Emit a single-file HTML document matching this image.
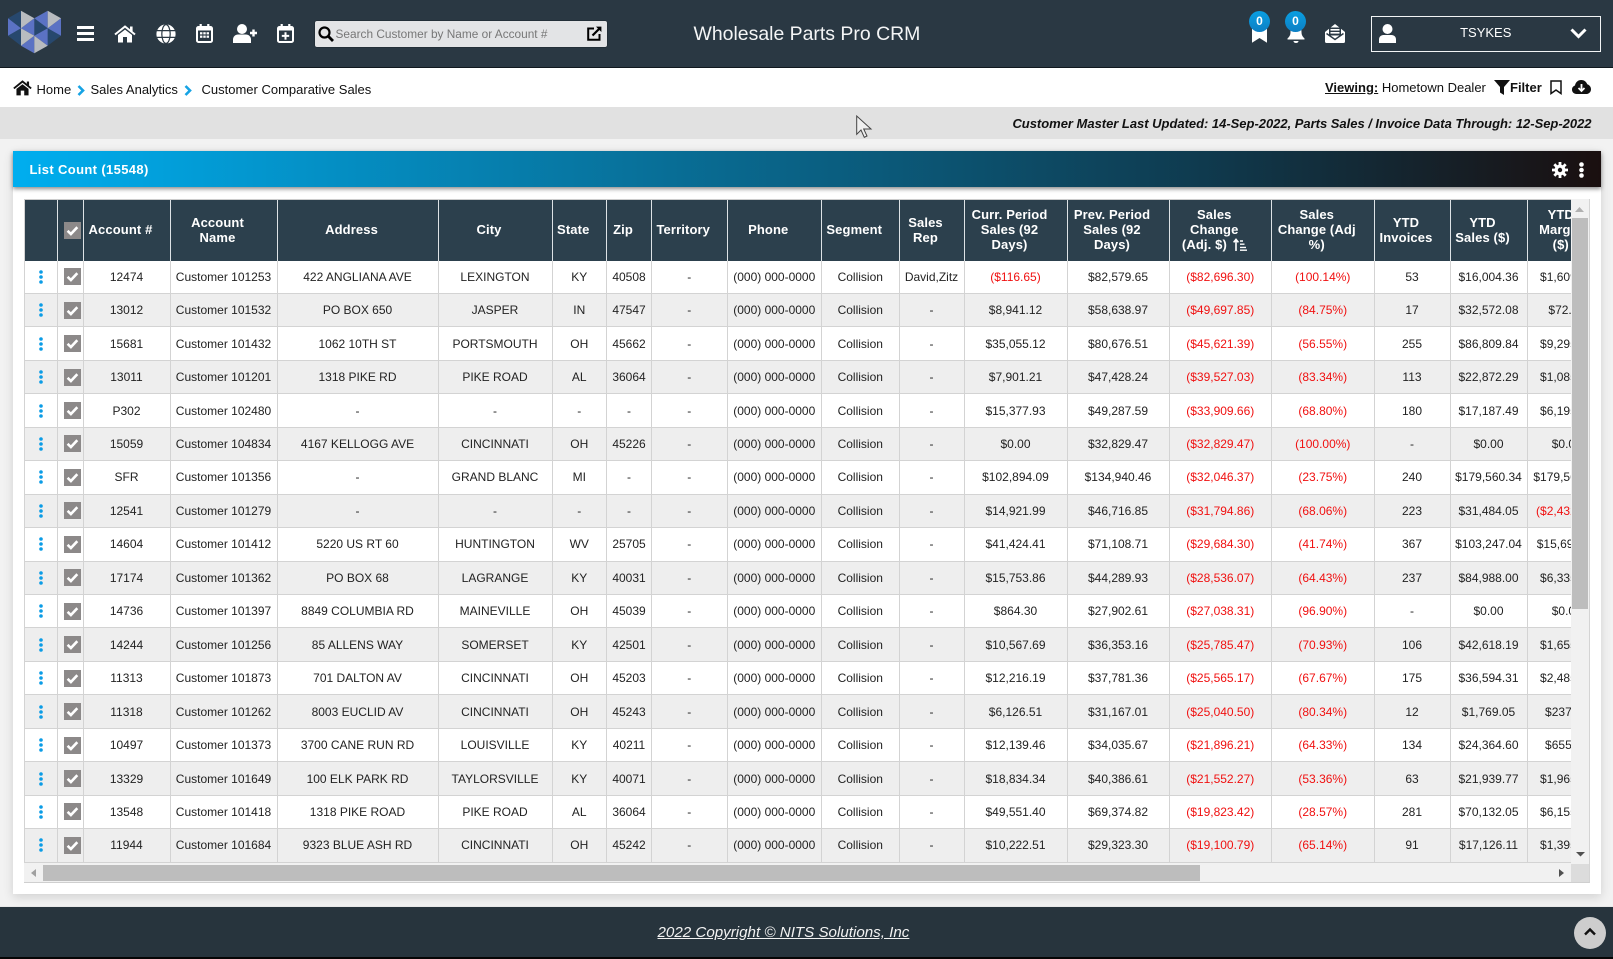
<!DOCTYPE html>
<html lang="en"><head><meta charset="utf-8"><title>Wholesale Parts Pro CRM</title>
<style>
*{box-sizing:border-box}
html,body{margin:0;padding:0;width:1613px;height:959px;overflow:hidden;background:#f2f2f2;font-family:"Liberation Sans",sans-serif;color:#222}
.a{position:absolute}
#top{left:0;top:0;width:1613px;height:68px;background:#2a3843;border-bottom:1px solid #10181e}
#bc{left:0;top:68px;width:1613px;height:39px;background:#fff;font-size:13px;color:#111}
#strip{left:0;top:107px;width:1613px;height:32px;background:#e1e1e1}
#card{left:13px;top:151px;width:1588px;height:743px;background:#fff;box-shadow:0 3px 10px rgba(0,0,0,.14)}
#bar{left:13px;top:151px;width:1588px;height:36px;background:linear-gradient(to right,#00aeef 0,#0f3a4e 75%,#1a0f0f 100%);box-shadow:0 2px 4px rgba(0,0,0,.45)}
#tw{left:24px;top:199px;width:1566px;height:683.5px;background:#f1f1f1;border-right:1px solid #d4d4d4;border-bottom:1px solid #cfcfcf}
#clip{left:0;top:0;width:1547px;height:664.5px;overflow:hidden}
.r{display:grid;grid-template-columns:33.5px 26px 87px 107px 161px 114px 54.5px 45px 75.5px 94.5px 77.5px 65px 103px 102px 102.5px 102.5px 76px 77px 79.5px;width:1583px}
.h{height:61.5px;background:#2c404d;color:#fff;font-weight:700;font-size:13px;line-height:15.2px;letter-spacing:.12px;border-top:1px solid #ccc}
.h span{display:flex;align-items:center;justify-content:center;text-align:center;padding-right:12px;padding-bottom:1px;border-right:1.5px solid #dde2e5}
.b{height:33.46px;font-size:12px;background:#fff;color:#222}
.b:nth-child(even){background:#eee}
.b span{display:flex;align-items:center;justify-content:center;white-space:nowrap;border-right:1.5px solid #d3d3d3;border-bottom:1.5px solid #d3d3d3;border-left:0}
.b span.n{color:#f01010}
.h span:first-child,.b span:first-child{border-left:1px solid #d3d3d3}
.h span:nth-child(1){padding:0}
.h span:nth-child(2),.b span:nth-child(2){padding:0 0 0 4.5px}
svg{display:block}
.k{width:6px;height:14px}
.c{width:17px;height:17px}
.t{white-space:nowrap}
.s{display:inline-block;vertical-align:-2px;margin-left:2px}
#foot{left:0;top:905.5px;width:1613px;height:53.5px;background:#27343d;border-top:1px solid #e8e8e8;border-bottom:2px solid #050505}
</style></head><body>
<svg width="0" height="0" style="position:absolute"><defs>
<symbol id="k" viewBox="0 0 6 14"><circle cx="3" cy="2" r="1.8" fill="#0b9ce6"/><circle cx="3" cy="7" r="1.8" fill="#0b9ce6"/><circle cx="3" cy="12" r="1.8" fill="#0b9ce6"/></symbol>
<symbol id="c" viewBox="0 0 17 17"><rect width="17" height="17" fill="#8c8989"/><path d="M3.6 8.8l3.3 3.2 6.4-6.8" fill="none" stroke="#fff" stroke-width="2.6"/></symbol>
</defs></svg>

<div class="a" id="top"></div>
<svg class="a" style="left:0;top:0" width="70" height="60" viewBox="0 0 70 60">
<g fill="#27486e"><path d="M8 18.3L21 10.7V28.2Z"/><path d="M8 35.8L21 28.2V45.7Z"/><path d="M34.3 18.3L47.7 28.2 34.3 35.8Z"/><path d="M47.7 28.2L61 35.8 47.7 45.7Z"/></g>
<g fill="#5b72c4"><path d="M8 18.3L21 28.2 8 35.8Z"/><path d="M34.3 18.3V35.8L21 28.2Z"/><path d="M21 45.7L34.3 35.8V53.3Z"/><path d="M34.3 18.3L47.7 10.7V28.2Z"/><path d="M34.3 35.8L47.7 28.2V45.7Z"/><path d="M61 18.3V35.8L47.7 28.2Z"/></g>
<g fill="#b9bcc0"><path d="M21 10.7L34.3 18.3 21 28.2Z"/><path d="M21 28.2L34.3 35.8 21 45.7Z"/><path d="M34.3 53.3V35.8L47.7 45.7Z"/><path d="M47.7 10.7L61 18.3 47.7 28.2Z"/></g>
</svg>
<!-- hamburger -->
<svg class="a" style="left:77px;top:26px" width="17" height="15"><rect width="17" height="3" fill="#fff"/><rect y="6" width="17" height="3" fill="#fff"/><rect y="12" width="17" height="3" fill="#fff"/></svg>
<!-- home -->
<svg class="a" style="left:114px;top:24.5px" width="22" height="18" viewBox="0 0 22 18"><path d="M1 9.5L11 1.5 21 9.5" fill="none" stroke="#fff" stroke-width="2"/><rect x="16" y="1.5" width="2.6" height="5" fill="#fff"/><path d="M4 10L11 4.6 18 10V17.5H13V12H9V17.5H4Z" fill="#fff"/></svg>
<!-- globe -->
<svg class="a" style="left:155.5px;top:24px" width="20" height="20" viewBox="0 0 20 20"><circle cx="10" cy="10" r="9.6" fill="#fff"/><ellipse cx="10" cy="10" rx="4.2" ry="9.4" fill="none" stroke="#2a3843" stroke-width="1.2"/><path d="M1 6.6H19M1 13.4H19" stroke="#2a3843" stroke-width="1.3"/></svg>
<!-- calendar -->
<svg class="a" style="left:195.5px;top:24px" width="17" height="19" viewBox="0 0 17 19"><rect x="1" y="3" width="15" height="15" rx="1.5" fill="#2a3843" stroke="#fff" stroke-width="2"/><rect x="1" y="3" width="15" height="3.5" fill="#fff"/><rect x="3.6" y="0" width="2.2" height="4" fill="#fff"/><rect x="11.2" y="0" width="2.2" height="4" fill="#fff"/><g fill="#fff"><rect x="4" y="8.2" width="2.4" height="2.2"/><rect x="7.3" y="8.2" width="2.4" height="2.2"/><rect x="10.6" y="8.2" width="2.4" height="2.2"/><rect x="4" y="11.6" width="2.4" height="2.2"/><rect x="7.3" y="11.6" width="2.4" height="2.2"/><rect x="10.6" y="11.6" width="2.4" height="2.2"/></g></svg>
<!-- user plus -->
<svg class="a" style="left:232.5px;top:24px" width="25" height="19" viewBox="0 0 25 19"><circle cx="9" cy="5" r="5" fill="#fff"/><path d="M0 19V15.5C0 12.5 2.5 10.5 5 10.5H13C15.5 10.5 18 12.5 18 15.5V19Z" fill="#fff"/><path d="M20.5 5.5V12.5M17 9H24" stroke="#fff" stroke-width="2.4"/></svg>
<!-- calendar plus -->
<svg class="a" style="left:277px;top:24px" width="17" height="19" viewBox="0 0 17 19"><rect x="1" y="3" width="15" height="15" rx="1.5" fill="#2a3843" stroke="#fff" stroke-width="2"/><rect x="1" y="3" width="15" height="3.5" fill="#fff"/><rect x="3.6" y="0" width="2.2" height="4" fill="#fff"/><rect x="11.2" y="0" width="2.2" height="4" fill="#fff"/><path d="M8.5 8.2V15.6M4.8 11.9H12.2" stroke="#fff" stroke-width="2"/></svg>
<!-- search -->
<div class="a" style="left:315px;top:20.5px;width:291.5px;height:26px;background:#e3e4e6;border-radius:2px;box-shadow:0 0 1px #000"></div>
<svg class="a" style="left:317.5px;top:26px" width="16" height="16" viewBox="0 0 16 16"><circle cx="6.5" cy="6.5" r="5" fill="none" stroke="#000" stroke-width="2.2"/><path d="M10.3 10.3L15 15" stroke="#000" stroke-width="2.8"/></svg>
<div class="a t" style="left:335.5px;top:26.6px;font-size:11.85px;line-height:15px;color:#777">Search Customer by Name or Account #</div>
<svg class="a" style="left:587px;top:26px" width="15" height="15" viewBox="0 0 15 15"><path d="M7 2.5H1.2V13.8H12.5V8" fill="none" stroke="#000" stroke-width="2"/><path d="M5.5 9.5L13 2" stroke="#000" stroke-width="2.2"/><path d="M9 0.6H14.4V6Z" fill="#000"/></svg>
<div class="a t" style="left:693.5px;top:21.5px;font-size:19.45px;line-height:24px;color:#f4f5f6">Wholesale Parts Pro CRM</div>
<!-- ribbon -->
<svg class="a" style="left:1252px;top:24px" width="15" height="19" viewBox="0 0 15 19"><path d="M0 0H15V18.8L7.5 14 0 18.8Z" fill="#fff"/></svg>
<div class="a t" style="left:1249px;top:10.5px;width:21px;height:21px;border-radius:50%;background:linear-gradient(#0a9fe2,#0c7fc4);color:#fff;font-weight:700;font-size:12px;line-height:21px;text-align:center">0</div>
<!-- bell -->
<svg class="a" style="left:1286.5px;top:24px" width="18" height="19" viewBox="0 0 18 19"><path d="M9 1C5 1 3.5 4 3.5 8C3.5 11 2.5 12.5 0.5 14.5V15.5H17.5V14.5C15.5 12.5 14.5 11 14.5 8C14.5 4 13 1 9 1Z" fill="#fff"/><path d="M6.5 17H11.5C11.5 18.2 10.4 19 9 19S6.5 18.2 6.5 17Z" fill="#fff"/></svg>
<div class="a t" style="left:1285px;top:10.5px;width:21px;height:21px;border-radius:50%;background:linear-gradient(#0a9fe2,#0c7fc4);color:#fff;font-weight:700;font-size:12px;line-height:21px;text-align:center">0</div>
<!-- envelope -->
<svg class="a" style="left:1325px;top:24px" width="20" height="19" viewBox="0 0 20 19"><path d="M0 8L10 0 20 8V17.5C20 18.4 19.4 19 18.5 19H1.5C.6 19 0 18.4 0 17.5Z" fill="#fff"/><path d="M1.5 9.5L10 15.5 18.5 9.5" fill="none" stroke="#2a3843" stroke-width="1.4"/><rect x="4" y="3.5" width="12" height="8" fill="#2a3843"/><rect x="5.5" y="5" width="9" height="1.6" fill="#fff"/><rect x="5.5" y="8" width="9" height="1.6" fill="#fff"/></svg>
<!-- user box -->
<div class="a" style="left:1370.5px;top:16px;width:230.5px;height:36px;border:1.5px solid #f2f4f5"></div>
<svg class="a" style="left:1379px;top:24px" width="17" height="19" viewBox="0 0 17 19"><circle cx="8.5" cy="5" r="5" fill="#fff"/><path d="M0 19V15.5C0 12.8 2 11 4.5 11H12.5C15 11 17 12.8 17 15.5V19Z" fill="#fff"/></svg>
<div class="a t" style="left:1460px;top:25px;width:51.5px;text-align:center;color:#fff;font-size:13px;line-height:15px">TSYKES</div>
<svg class="a" style="left:1570px;top:28px" width="17" height="11" viewBox="0 0 17 11"><path d="M1.5 1.5L8.5 8.5 15.5 1.5" fill="none" stroke="#fff" stroke-width="3"/></svg>

<div class="a" id="bc"></div>
<svg class="a" style="left:13px;top:79.5px" width="19" height="16" viewBox="0 0 22 18"><path d="M1 9.5L11 1.5 21 9.5" fill="none" stroke="#111" stroke-width="2.2"/><rect x="16" y="1.5" width="2.6" height="5" fill="#111"/><path d="M4 10L11 4.6 18 10V17.5H13V12H9V17.5H4Z" fill="#111"/></svg>
<div class="a t" style="left:36.5px;top:82px;font-size:13px;line-height:15px;color:#111">Home</div>
<svg class="a" style="left:77px;top:85px" width="8" height="11" viewBox="0 0 8 11"><path d="M1.5 1L6 5.5 1.5 10" fill="none" stroke="#16a3e4" stroke-width="2.6"/></svg>
<div class="a t" style="left:90.5px;top:82px;font-size:13px;line-height:15px;color:#111">Sales Analytics</div>
<svg class="a" style="left:184px;top:85px" width="8" height="11" viewBox="0 0 8 11"><path d="M1.5 1L6 5.5 1.5 10" fill="none" stroke="#16a3e4" stroke-width="2.6"/></svg>
<div class="a t" style="left:201.5px;top:82px;font-size:13px;line-height:15px;color:#111">Customer Comparative Sales</div>
<div class="a t" style="left:1325px;top:80px;font-size:13px;line-height:15px;color:#111"><b style="text-decoration:underline">Viewing:</b> Hometown Dealer</div>
<svg class="a" style="left:1494px;top:79.5px" width="16" height="15" viewBox="0 0 16 15"><path d="M0 0H16L10 7V15L6 12.5V7Z" fill="#111"/></svg>
<div class="a t" style="left:1510px;top:80px;font-size:13px;line-height:15px;font-weight:700;color:#111">Filter</div>
<svg class="a" style="left:1550px;top:79.5px" width="12" height="15" viewBox="0 0 12 15"><path d="M1 1H11V13.5L6 10 1 13.5Z" fill="none" stroke="#111" stroke-width="1.5"/></svg>
<svg class="a" style="left:1572px;top:80px" width="19" height="14" viewBox="0 0 19 14"><path d="M4.5 14C2 14 0 12 0 9.6 0 7.6 1.3 6 3 5.5 3.4 2.4 6 0 9.2 0 12 0 14.3 1.7 15.2 4.2 17.4 4.8 19 6.8 19 9.2 19 11.9 16.9 14 14.2 14Z" fill="#111"/><path d="M9.5 4V10M6.5 8L9.5 11 12.5 8" fill="none" stroke="#fff" stroke-width="1.8"/></svg>

<div class="a" id="strip"></div>
<div class="a t" style="right:21.5px;top:115.5px;font-size:13px;line-height:16px;font-weight:700;font-style:italic;letter-spacing:-.02px;color:#111">Customer Master Last Updated: 14-Sep-2022, Parts Sales / Invoice Data Through: 12-Sep-2022</div>
<svg class="a" style="left:855px;top:114px" width="20" height="26" viewBox="0 0 20 26"><path d="M1.7 2V20.3L6 16 9.3 23.3 12 22 8.7 15H16Z" fill="#efefef" stroke="#444" stroke-width="1"/></svg>

<div class="a" id="card"></div>
<div class="a" id="bar"></div>
<div class="a t" style="left:29.5px;top:162px;color:#fff;font-weight:700;font-size:13px;line-height:15px;letter-spacing:.36px">List Count (15548)</div>
<svg class="a" style="left:1551.5px;top:162px" width="16" height="16" viewBox="0 0 16 16"><path d="M8 2.6a5.4 5.4 0 1 0 0 10.8 5.4 5.4 0 0 0 0-10.8Zm0 3.2a2.2 2.2 0 1 1 0 4.4 2.2 2.2 0 0 1 0-4.4Z" fill="#fff" fill-rule="evenodd"/><g stroke="#fff" stroke-width="2.8"><path d="M8 0V3.4M8 12.6V16M0 8H3.4M12.6 8H16M2.3 2.3L4.7 4.7M11.3 11.3L13.7 13.7M13.7 2.3L11.3 4.7M4.7 11.3L2.3 13.7"/></g></svg>
<svg class="a" style="left:1579px;top:162px" width="5" height="16" viewBox="0 0 5 16"><circle cx="2.5" cy="2.5" r="2.3" fill="#fff"/><circle cx="2.5" cy="8" r="2.3" fill="#fff"/><circle cx="2.5" cy="13.5" r="2.3" fill="#fff"/></svg>

<div class="a" id="tw">
<div class="a" id="clip">
<div class="r h"><span></span><span><svg class="c"><use href="#c"/></svg></span><span>Account #</span><span>Account<br>Name</span><span>Address</span><span>City</span><span>State</span><span>Zip</span><span>Territory</span><span>Phone</span><span>Segment</span><span>Sales<br>Rep</span><span>Curr. Period<br>Sales (92<br>Days)</span><span>Prev. Period<br>Sales (92<br>Days)</span><span><div>Sales<br>Change<br>(Adj. $) <svg class="s" width="14" height="13" viewBox="0 0 14 13"><path d="M3 13V2M0.6 4.4L3 1.4 5.4 4.4" fill="none" stroke="#fff" stroke-width="1.6"/><path d="M7 3H10M7 6.2H11.5M7 9.4H13M7 12.2H14" stroke="#fff" stroke-width="1.4"/></svg></div></span><span>Sales<br>Change (Adj<br>%)</span><span>YTD<br>Invoices</span><span>YTD<br>Sales ($)</span><span>YTD<br>Margin<br>($)</span></div>
<div id="rows">
<div class="r b"><span><svg class="k"><use href="#k"/></svg></span><span><svg class="c"><use href="#c"/></svg></span><span>12474</span><span>Customer 101253</span><span>422 ANGLIANA AVE</span><span>LEXINGTON</span><span>KY</span><span>40508</span><span>-</span><span>(000) 000-0000</span><span>Collision</span><span>David,Zitz</span><span class="n">($116.65)</span><span>$82,579.65</span><span class="n">($82,696.30)</span><span class="n">(100.14%)</span><span>53</span><span>$16,004.36</span><span>$1,609.16</span></div>
<div class="r b"><span><svg class="k"><use href="#k"/></svg></span><span><svg class="c"><use href="#c"/></svg></span><span>13012</span><span>Customer 101532</span><span>PO BOX 650</span><span>JASPER</span><span>IN</span><span>47547</span><span>-</span><span>(000) 000-0000</span><span>Collision</span><span>-</span><span>$8,941.12</span><span>$58,638.97</span><span class="n">($49,697.85)</span><span class="n">(84.75%)</span><span>17</span><span>$32,572.08</span><span>$72.50</span></div>
<div class="r b"><span><svg class="k"><use href="#k"/></svg></span><span><svg class="c"><use href="#c"/></svg></span><span>15681</span><span>Customer 101432</span><span>1062 10TH ST</span><span>PORTSMOUTH</span><span>OH</span><span>45662</span><span>-</span><span>(000) 000-0000</span><span>Collision</span><span>-</span><span>$35,055.12</span><span>$80,676.51</span><span class="n">($45,621.39)</span><span class="n">(56.55%)</span><span>255</span><span>$86,809.84</span><span>$9,295.40</span></div>
<div class="r b"><span><svg class="k"><use href="#k"/></svg></span><span><svg class="c"><use href="#c"/></svg></span><span>13011</span><span>Customer 101201</span><span>1318 PIKE RD</span><span>PIKE ROAD</span><span>AL</span><span>36064</span><span>-</span><span>(000) 000-0000</span><span>Collision</span><span>-</span><span>$7,901.21</span><span>$47,428.24</span><span class="n">($39,527.03)</span><span class="n">(83.34%)</span><span>113</span><span>$22,872.29</span><span>$1,085.20</span></div>
<div class="r b"><span><svg class="k"><use href="#k"/></svg></span><span><svg class="c"><use href="#c"/></svg></span><span>P302</span><span>Customer 102480</span><span>-</span><span>-</span><span>-</span><span>-</span><span>-</span><span>(000) 000-0000</span><span>Collision</span><span>-</span><span>$15,377.93</span><span>$49,287.59</span><span class="n">($33,909.66)</span><span class="n">(68.80%)</span><span>180</span><span>$17,187.49</span><span>$6,195.10</span></div>
<div class="r b"><span><svg class="k"><use href="#k"/></svg></span><span><svg class="c"><use href="#c"/></svg></span><span>15059</span><span>Customer 104834</span><span>4167 KELLOGG AVE</span><span>CINCINNATI</span><span>OH</span><span>45226</span><span>-</span><span>(000) 000-0000</span><span>Collision</span><span>-</span><span>$0.00</span><span>$32,829.47</span><span class="n">($32,829.47)</span><span class="n">(100.00%)</span><span>-</span><span>$0.00</span><span>$0.00</span></div>
<div class="r b"><span><svg class="k"><use href="#k"/></svg></span><span><svg class="c"><use href="#c"/></svg></span><span>SFR</span><span>Customer 101356</span><span>-</span><span>GRAND BLANC</span><span>MI</span><span>-</span><span>-</span><span>(000) 000-0000</span><span>Collision</span><span>-</span><span>$102,894.09</span><span>$134,940.46</span><span class="n">($32,046.37)</span><span class="n">(23.75%)</span><span>240</span><span>$179,560.34</span><span>$179,560.34</span></div>
<div class="r b"><span><svg class="k"><use href="#k"/></svg></span><span><svg class="c"><use href="#c"/></svg></span><span>12541</span><span>Customer 101279</span><span>-</span><span>-</span><span>-</span><span>-</span><span>-</span><span>(000) 000-0000</span><span>Collision</span><span>-</span><span>$14,921.99</span><span>$46,716.85</span><span class="n">($31,794.86)</span><span class="n">(68.06%)</span><span>223</span><span>$31,484.05</span><span class="n">($2,432.10)</span></div>
<div class="r b"><span><svg class="k"><use href="#k"/></svg></span><span><svg class="c"><use href="#c"/></svg></span><span>14604</span><span>Customer 101412</span><span>5220 US RT 60</span><span>HUNTINGTON</span><span>WV</span><span>25705</span><span>-</span><span>(000) 000-0000</span><span>Collision</span><span>-</span><span>$41,424.41</span><span>$71,108.71</span><span class="n">($29,684.30)</span><span class="n">(41.74%)</span><span>367</span><span>$103,247.04</span><span>$15,694.20</span></div>
<div class="r b"><span><svg class="k"><use href="#k"/></svg></span><span><svg class="c"><use href="#c"/></svg></span><span>17174</span><span>Customer 101362</span><span>PO BOX 68</span><span>LAGRANGE</span><span>KY</span><span>40031</span><span>-</span><span>(000) 000-0000</span><span>Collision</span><span>-</span><span>$15,753.86</span><span>$44,289.93</span><span class="n">($28,536.07)</span><span class="n">(64.43%)</span><span>237</span><span>$84,988.00</span><span>$6,335.10</span></div>
<div class="r b"><span><svg class="k"><use href="#k"/></svg></span><span><svg class="c"><use href="#c"/></svg></span><span>14736</span><span>Customer 101397</span><span>8849 COLUMBIA RD</span><span>MAINEVILLE</span><span>OH</span><span>45039</span><span>-</span><span>(000) 000-0000</span><span>Collision</span><span>-</span><span>$864.30</span><span>$27,902.61</span><span class="n">($27,038.31)</span><span class="n">(96.90%)</span><span>-</span><span>$0.00</span><span>$0.00</span></div>
<div class="r b"><span><svg class="k"><use href="#k"/></svg></span><span><svg class="c"><use href="#c"/></svg></span><span>14244</span><span>Customer 101256</span><span>85 ALLENS WAY</span><span>SOMERSET</span><span>KY</span><span>42501</span><span>-</span><span>(000) 000-0000</span><span>Collision</span><span>-</span><span>$10,567.69</span><span>$36,353.16</span><span class="n">($25,785.47)</span><span class="n">(70.93%)</span><span>106</span><span>$42,618.19</span><span>$1,655.30</span></div>
<div class="r b"><span><svg class="k"><use href="#k"/></svg></span><span><svg class="c"><use href="#c"/></svg></span><span>11313</span><span>Customer 101873</span><span>701 DALTON AV</span><span>CINCINNATI</span><span>OH</span><span>45203</span><span>-</span><span>(000) 000-0000</span><span>Collision</span><span>-</span><span>$12,216.19</span><span>$37,781.36</span><span class="n">($25,565.17)</span><span class="n">(67.67%)</span><span>175</span><span>$36,594.31</span><span>$2,485.60</span></div>
<div class="r b"><span><svg class="k"><use href="#k"/></svg></span><span><svg class="c"><use href="#c"/></svg></span><span>11318</span><span>Customer 101262</span><span>8003 EUCLID AV</span><span>CINCINNATI</span><span>OH</span><span>45243</span><span>-</span><span>(000) 000-0000</span><span>Collision</span><span>-</span><span>$6,126.51</span><span>$31,167.01</span><span class="n">($25,040.50)</span><span class="n">(80.34%)</span><span>12</span><span>$1,769.05</span><span>$237.40</span></div>
<div class="r b"><span><svg class="k"><use href="#k"/></svg></span><span><svg class="c"><use href="#c"/></svg></span><span>10497</span><span>Customer 101373</span><span>3700 CANE RUN RD</span><span>LOUISVILLE</span><span>KY</span><span>40211</span><span>-</span><span>(000) 000-0000</span><span>Collision</span><span>-</span><span>$12,139.46</span><span>$34,035.67</span><span class="n">($21,896.21)</span><span class="n">(64.33%)</span><span>134</span><span>$24,364.60</span><span>$655.20</span></div>
<div class="r b"><span><svg class="k"><use href="#k"/></svg></span><span><svg class="c"><use href="#c"/></svg></span><span>13329</span><span>Customer 101649</span><span>100 ELK PARK RD</span><span>TAYLORSVILLE</span><span>KY</span><span>40071</span><span>-</span><span>(000) 000-0000</span><span>Collision</span><span>-</span><span>$18,834.34</span><span>$40,386.61</span><span class="n">($21,552.27)</span><span class="n">(53.36%)</span><span>63</span><span>$21,939.77</span><span>$1,965.40</span></div>
<div class="r b"><span><svg class="k"><use href="#k"/></svg></span><span><svg class="c"><use href="#c"/></svg></span><span>13548</span><span>Customer 101418</span><span>1318 PIKE ROAD</span><span>PIKE ROAD</span><span>AL</span><span>36064</span><span>-</span><span>(000) 000-0000</span><span>Collision</span><span>-</span><span>$49,551.40</span><span>$69,374.82</span><span class="n">($19,823.42)</span><span class="n">(28.57%)</span><span>281</span><span>$70,132.05</span><span>$6,155.30</span></div>
<div class="r b"><span><svg class="k"><use href="#k"/></svg></span><span><svg class="c"><use href="#c"/></svg></span><span>11944</span><span>Customer 101684</span><span>9323 BLUE ASH RD</span><span>CINCINNATI</span><span>OH</span><span>45242</span><span>-</span><span>(000) 000-0000</span><span>Collision</span><span>-</span><span>$10,222.51</span><span>$29,323.30</span><span class="n">($19,100.79)</span><span class="n">(65.14%)</span><span>91</span><span>$17,126.11</span><span>$1,395.20</span></div>
</div>
</div>
<!-- vertical scrollbar -->
<div class="a" style="left:1547.5px;top:0;width:17.5px;height:664.5px;background:#f1f1f1"></div>
<div class="a" style="left:1547.5px;top:19px;width:16.5px;height:391px;background:#bdbdbd"></div>
<svg class="a" style="left:1551px;top:8px" width="9" height="5"><path d="M0 5L4.5 0 9 5Z" fill="#b0b0b0"/></svg>
<svg class="a" style="left:1551.5px;top:653px" width="9" height="4.5"><path d="M0 0L4.5 4.5 9 0Z" fill="#505050"/></svg>
<!-- horizontal scrollbar -->
<div class="a" style="left:0;top:664.5px;width:1547px;height:18.5px;background:#f1f1f1"></div>
<div class="a" style="left:18.5px;top:666px;width:1157px;height:16px;background:#bdbdbd"></div>
<svg class="a" style="left:7px;top:670px" width="5" height="8"><path d="M5 0L0 4 5 8Z" fill="#a0a0a0"/></svg>
<svg class="a" style="left:1535px;top:670px" width="5" height="8"><path d="M0 0L5 4 0 8Z" fill="#505050"/></svg>
<div class="a" style="left:1547px;top:664.5px;width:18px;height:18.5px;background:#dcdcdc"></div>
</div>

<div class="a" id="foot"></div>
<div class="a t" style="left:657.5px;top:924px;font-size:15.15px;line-height:18px;font-style:italic;text-decoration:underline;color:#f2f2f2">2022 Copyright © NITS Solutions, Inc</div>
<div class="a" style="left:1574px;top:916.5px;width:32px;height:32px;border-radius:50%;background:#cdcdcd"></div>
<svg class="a" style="left:1584px;top:927px" width="12" height="9" viewBox="0 0 12 9"><path d="M1 7.5L6 2.5 11 7.5" fill="none" stroke="#111" stroke-width="2.4"/></svg>
</body></html>
